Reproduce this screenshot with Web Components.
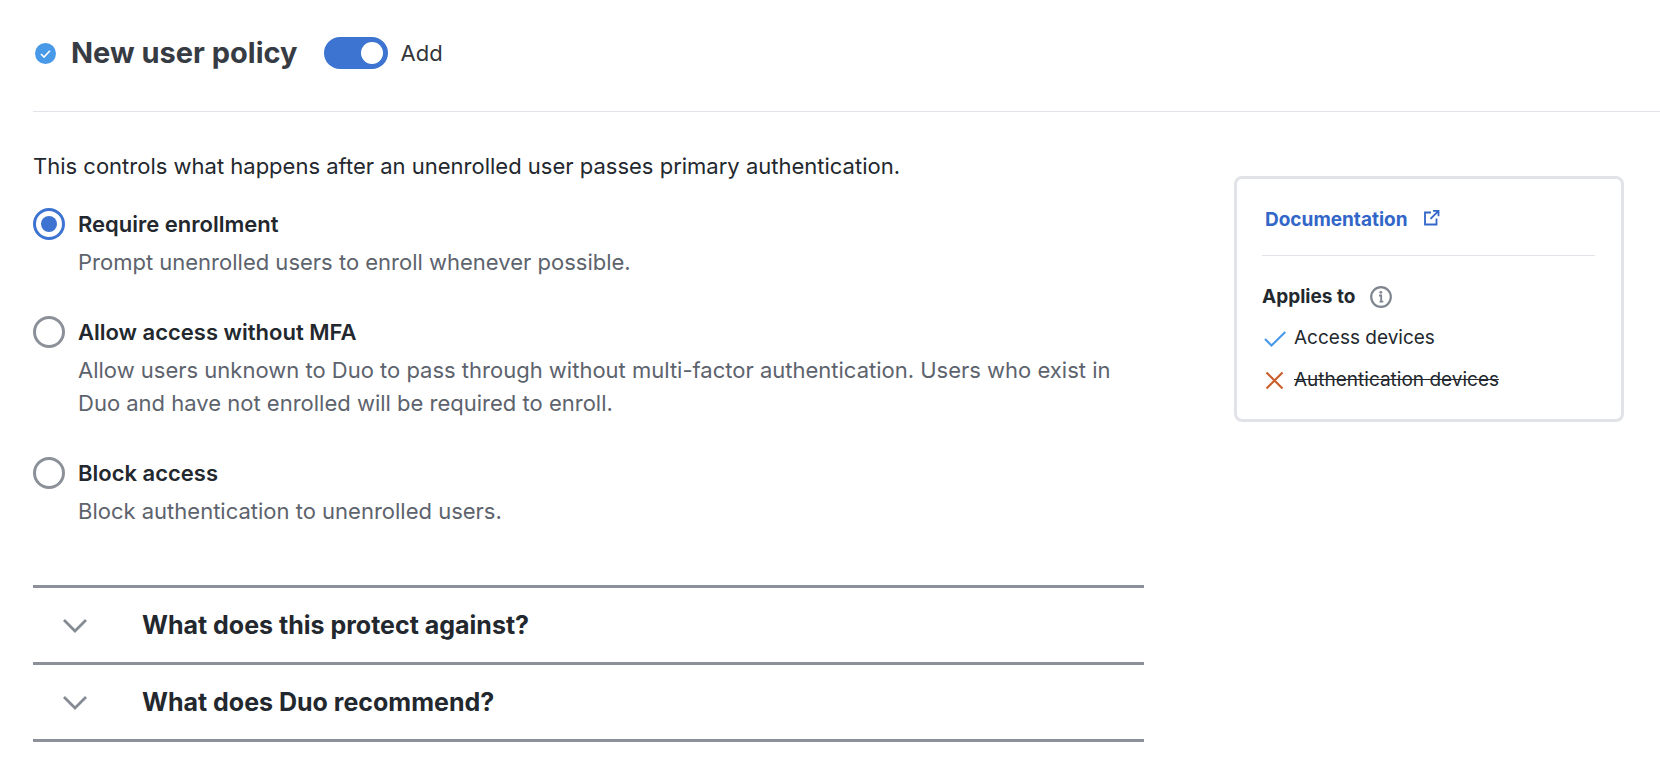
<!DOCTYPE html>
<html lang="en">
<head>
<meta charset="utf-8">
<meta name="viewport" content="width=device-width, initial-scale=1">
<title>New user policy</title>
<style>
    body {
        margin: 0;
        background: #fff;
        color: #23282e;
        font-family: Inter, "Liberation Sans", sans-serif;
        font-size: 22px;
        font-optical-sizing: none;
        line-height: 32px;
    }
</style>
</head>
<body>
<policy-page>
    <policy-header slot="header" label="Add">New user policy</policy-header>
    <policy-options>
        <span slot="intro">This controls what happens after an unenrolled user passes primary authentication.</span>
        <policy-option value="enroll" checked>
            Require enrollment
            <span slot="description">Prompt unenrolled users to enroll whenever possible.</span>
        </policy-option>
        <policy-option value="allow">
            Allow access without MFA
            <span slot="description">Allow users unknown to Duo to pass through without multi-factor authentication. Users who exist in Duo and have not enrolled will be required to enroll.</span>
        </policy-option>
        <policy-option value="block">
            Block access
            <span slot="description">Block authentication to unenrolled users.</span>
        </policy-option>
    </policy-options>
    <policy-accordion>
        <policy-question>What does this protect against?</policy-question>
        <policy-question>What does Duo recommend?</policy-question>
    </policy-accordion>
    <policy-info slot="aside">
        <device-item>Access devices</device-item>
        <device-item excluded>Authentication devices</device-item>
    </policy-info>
</policy-page>

<script>
    // Page frame: header on top, content and info card side by side
    class PolicyPage extends HTMLElement {
        constructor() {
            super();
            this.attachShadow({ mode: 'open' }).innerHTML = `
                <style>
                    :host {
                        display: block;
                        padding-left: 33px;
                    }
                    .columns {
                        display: grid;
                        grid-template-columns: minmax(0, 1fr) 390px;
                        gap: 90px;
                        align-items: start;
                        padding: 38px 36px 32px 0;
                    }
                    aside {
                        padding-top: 26px;
                    }
                    @media (max-width: 1000px) {
                        .columns {
                            grid-template-columns: minmax(0, 1fr);
                            gap: 32px;
                        }
                    }
                </style>
                <slot name="header"></slot>
                <div class="columns">
                    <main><slot></slot></main>
                    <aside><slot name="aside"></slot></aside>
                </div>
            `;
        }
    }

    class PolicyHeader extends HTMLElement {
        constructor() {
            super();
            this.attachShadow({ mode: 'open' });
        }

        connectedCallback() {
            this.shadowRoot.innerHTML = `
                <style>
                    :host {
                        display: flex;
                        align-items: center;
                        border-bottom: 1px solid #e1e4e8;
                        padding: 33px 0 38px 2px;
                    }
                    svg {
                        flex: none;
                        margin-right: 15px;
                    }
                    h1 {
                        margin: 0 26px 0 0;
                        color: #373b43;
                        font-size: 29px;
                        font-weight: 700;
                        line-height: 40px;
                    }
                    label {
                        display: flex;
                        align-items: center;
                        gap: 13px;
                        color: #33363a;
                        cursor: pointer;
                    }
                    input {
                        appearance: none;
                        display: flex;
                        align-items: center;
                        box-sizing: border-box;
                        width: 64px;
                        height: 32px;
                        margin: 0;
                        padding: 0 5px;
                        border-radius: 16px;
                        background: #8c9199;
                        cursor: pointer;
                    }
                    input::before {
                        content: "";
                        width: 22px;
                        height: 22px;
                        border-radius: 50%;
                        background: #fff;
                    }
                    input:checked {
                        justify-content: flex-end;
                        background: #3e74d1;
                    }
                </style>
                <svg width="21" height="21" viewBox="0 0 21 21" fill="none" aria-hidden="true">
                    <circle cx="10.5" cy="10.5" r="10.5" fill="#4899e8"/>
                    <path d="M6 11l3 3 6-6.3" stroke="#fff" stroke-width="1.6"/>
                </svg>
                <h1><slot></slot></h1>
                <label><input type="checkbox" role="switch" checked>${this.getAttribute('label')}</label>
            `;
        }
    }

    // Keeps one option selected, since each radio lives in its own shadow root
    class PolicyOptions extends HTMLElement {
        constructor() {
            super();
            this.attachShadow({ mode: 'open' }).innerHTML = `
                <style>
                    :host {
                        display: block;
                    }
                    p {
                        margin: 0 0 26px;
                    }
                    .list {
                        display: flex;
                        flex-direction: column;
                        gap: 37px;
                    }
                </style>
                <p id="intro"><slot name="intro"></slot></p>
                <div class="list" role="radiogroup" aria-labelledby="intro"><slot></slot></div>
            `;
            this.addEventListener('option-selected', (e) => {
                this.querySelectorAll('policy-option').forEach((option) => {
                    option.checked = option === e.target;
                });
            });
        }
    }

    class PolicyOption extends HTMLElement {
        constructor() {
            super();
            this.attachShadow({ mode: 'open' }).innerHTML = `
                <style>
                    :host {
                        display: grid;
                        grid-template-columns: 32px minmax(0, 1fr);
                        column-gap: 13px;
                        row-gap: 6px;
                    }
                    input {
                        appearance: none;
                        display: grid;
                        place-content: center;
                        box-sizing: border-box;
                        width: 32px;
                        height: 32px;
                        margin: 0;
                        border: 3px solid #8c9199;
                        border-radius: 50%;
                        cursor: pointer;
                    }
                    input:checked {
                        border-color: #3e74d1;
                    }
                    input:checked::before {
                        content: "";
                        width: 16px;
                        height: 16px;
                        border-radius: 50%;
                        background: #3e74d1;
                    }
                    label {
                        font-weight: 600;
                        cursor: pointer;
                    }
                    .description {
                        grid-column: 2;
                        color: #5d636d;
                        line-height: 33px;
                    }
                </style>
                <input type="radio" id="radio" aria-describedby="description">
                <label for="radio"><slot></slot></label>
                <div class="description" id="description"><slot name="description"></slot></div>
            `;
            this.input = this.shadowRoot.querySelector('input');
            this.input.addEventListener('change', () => {
                this.dispatchEvent(new CustomEvent('option-selected', { bubbles: true }));
            });
        }

        connectedCallback() {
            this.input.value = this.getAttribute('value');
            this.checked = this.hasAttribute('checked');
        }

        set checked(value) {
            this.input.checked = value;
        }
    }

    class PolicyAccordion extends HTMLElement {
        constructor() {
            super();
            this.attachShadow({ mode: 'open' }).innerHTML = `
                <style>
                    :host {
                        display: block;
                        margin-top: 57px;
                        border-top: 3px solid #8c9199;
                    }
                </style>
                <slot></slot>
            `;
        }
    }

    class PolicyQuestion extends HTMLElement {
        constructor() {
            super();
            this.attachShadow({ mode: 'open' }).innerHTML = `
                <style>
                    :host {
                        display: block;
                        border-bottom: 3px solid #8c9199;
                    }
                    h2 {
                        margin: 0;
                        font-size: 25px;
                        font-weight: 700;
                        line-height: 36px;
                    }
                    button {
                        display: flex;
                        align-items: center;
                        gap: 54px;
                        width: 100%;
                        padding: 19px 29px;
                        border: 0;
                        background: none;
                        color: #23282e;
                        font: inherit;
                        font-optical-sizing: none;
                        text-align: left;
                        cursor: pointer;
                    }
                    svg {
                        flex: none;
                    }
                </style>
                <h2>
                    <button type="button" aria-expanded="false">
                        <svg width="26" height="16" viewBox="0 0 26 16" fill="none" aria-hidden="true">
                            <path d="M2 3l11 11L24 3" stroke="#858b93" stroke-width="2.8"/>
                        </svg>
                        <slot></slot>
                    </button>
                </h2>
            `;
        }
    }

    class PolicyInfo extends HTMLElement {
        constructor() {
            super();
            this.attachShadow({ mode: 'open' }).innerHTML = `
                <style>
                    :host {
                        display: block;
                        box-sizing: border-box;
                        border: 3px solid #e1e3e8;
                        border-radius: 8px;
                        padding: 25px 26px 23px 25px;
                        font-size: 19px;
                    }
                    .docs {
                        border-bottom: 1px solid #e1e4e8;
                        padding: 0 0 19px 3px;
                    }
                    a {
                        display: inline-flex;
                        align-items: center;
                        gap: 15px;
                        color: #3266c8;
                        font-weight: 700;
                        text-decoration: none;
                    }
                    a svg {
                        margin-bottom: 6px;
                    }
                    h2 {
                        display: flex;
                        align-items: center;
                        gap: 15px;
                        margin: 25px 0 0;
                        font-size: 19px;
                        font-weight: 700;
                        line-height: 32px;
                    }
                    ul {
                        display: flex;
                        flex-direction: column;
                        gap: 10px;
                        margin: 9px 0 0;
                        padding: 0;
                        list-style: none;
                    }
                </style>
                <div class="docs">
                    <a href="#documentation">
                        Documentation
                        <svg width="17" height="17" viewBox="0 0 17 17" fill="none" stroke="#3266c8" stroke-width="1.8" aria-hidden="true">
                            <path d="M8 3.5H2v12h11.500V9.500M10 1.800h5.500v5.500M15.500 1.800L7.500 9.800"/>
                        </svg>
                    </a>
                </div>
                <h2>
                    Applies to
                    <svg width="22" height="22" viewBox="0 0 22 22" fill="none" stroke="#7e858e" aria-hidden="true">
                        <circle cx="11" cy="11" r="9.800" stroke-width="2.2"/>
                        <path d="M9 9.500h2.200v6.300M9.500 15.700h3.800" stroke-width="1.800"/>
                        <circle cx="10.800" cy="6.300" r="1.400" fill="#7e858e" stroke="none"/>
                    </svg>
                </h2>
                <ul role="list"><slot></slot></ul>
            `;
        }
    }

    class DeviceItem extends HTMLElement {
        constructor() {
            super();
            this.attachShadow({ mode: 'open' });
        }

        connectedCallback() {
            const excluded = this.hasAttribute('excluded');
            this.setAttribute('role', 'listitem');
            this.shadowRoot.innerHTML = `
                <style>
                    :host {
                        display: flex;
                        align-items: center;
                        gap: 8px;
                    }
                    svg {
                        flex: none;
                    }
                </style>
                <svg width="24" height="24" viewBox="0 0 24 24" fill="none" stroke-width="2.2" aria-hidden="true">
                    ${excluded ?
                        '<path d="M4.500 4.500l16 16M20.500 4.500l-16 16" stroke="#cb5f2d"/>' :
                        '<path d="M3 13l6.500 6.500L23.300 6" stroke="#4899e8"/>'
                    }
                </svg>
                ${excluded ? '<s><slot></slot></s>' : '<slot></slot>'}
            `;
        }
    }

    customElements.define('policy-page', PolicyPage);
    customElements.define('policy-header', PolicyHeader);
    customElements.define('policy-options', PolicyOptions);
    customElements.define('policy-option', PolicyOption);
    customElements.define('policy-accordion', PolicyAccordion);
    customElements.define('policy-question', PolicyQuestion);
    customElements.define('policy-info', PolicyInfo);
    customElements.define('device-item', DeviceItem);
</script>
</body>
</html>
